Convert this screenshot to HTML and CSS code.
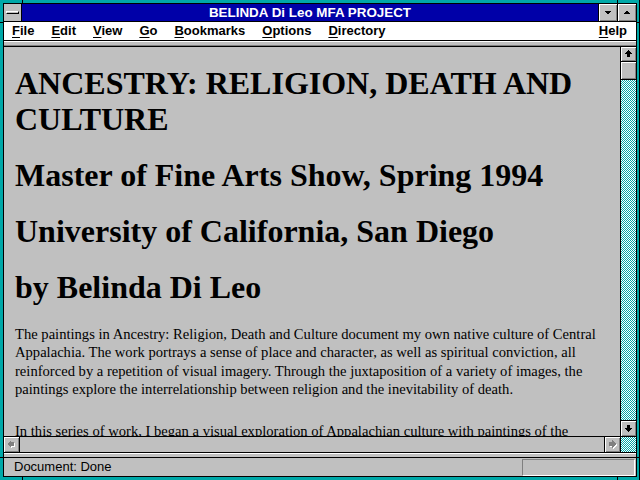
FILE: index.html
```html
<!DOCTYPE html>
<html>
<head>
<meta charset="utf-8">
<title>BELINDA Di Leo MFA PROJECT</title>
<link rel="stylesheet" href="styles.css">
</head>
<body>
<div class="screen">
  <span class="mark mark-tl-v"></span>
  <span class="mark mark-tl-h"></span>
  <span class="mark mark-tr-v"></span>
  <span class="mark mark-tr-h"></span>
  <span class="mark mark-bl-v"></span>
  <span class="mark mark-bl-h"></span>
  <span class="mark mark-br-v"></span>
  <span class="mark mark-br-h"></span>
  <div class="win">
    <div class="titlebar">
      <div class="sysbox"><span class="sysbar"></span></div>
      <div class="title">BELINDA Di Leo MFA PROJECT</div>
      <div class="tbtn">
        <svg width="18" height="17" viewBox="0 0 18 17" shape-rendering="crispEdges"><polygon points="5,7 12,7 8.5,10.5" fill="#000"/></svg>
      </div>
      <div class="tbtn">
        <svg width="18" height="17" viewBox="0 0 18 17" shape-rendering="crispEdges"><polygon points="5,10 12,10 8.5,6.5" fill="#000"/></svg>
      </div>
    </div>
    <div class="menubar">
      <span class="mi"><u>F</u>ile</span>
      <span class="mi"><u>E</u>dit</span>
      <span class="mi"><u>V</u>iew</span>
      <span class="mi"><u>G</u>o</span>
      <span class="mi"><u>B</u>ookmarks</span>
      <span class="mi"><u>O</u>ptions</span>
      <span class="mi"><u>D</u>irectory</span>
      <span class="mi mi-help"><u>H</u>elp</span>
    </div>
    <div class="band"></div>
    <div class="docrow">
      <div class="doc">
        <h1>ANCESTRY: RELIGION, DEATH AND CULTURE</h1>
        <h1>Master of Fine Arts Show, Spring 1994</h1>
        <h1>University of California, San Diego</h1>
        <h1>by Belinda Di Leo</h1>
        <p>The paintings in Ancestry: Religion, Death and Culture document my own native culture of Central Appalachia. The work portrays a sense of place and character, as well as spiritual conviction, all reinforced by a repetition of visual imagery. Through the juxtaposition of a variety of images, the paintings explore the interrelationship between religion and the inevitability of death.</p>
        <p>In this series of work, I began a visual exploration of Appalachian culture with paintings of the people, places and objects that shape the identity of the region.</p>
      </div>
      <div class="vscroll">
        <div class="sbtn">
          <svg width="15" height="14" viewBox="0 0 15 14" shape-rendering="crispEdges"><polygon points="7.5,3 11,7 9,7 9,10 6,10 6,7 4,7" fill="#000"/></svg>
        </div>
        <div class="thumb"></div>
        <div class="track"></div>
        <div class="sbtn sbtn-down">
          <svg width="15" height="15" viewBox="0 0 15 15" shape-rendering="crispEdges"><polygon points="7.5,11 11,7 9,7 9,4 6,4 6,7 4,7" fill="#000"/></svg>
        </div>
      </div>
    </div>
    <div class="hscroll">
      <div class="hbtn hbtn-left">
        <svg width="15" height="15" viewBox="0 0 15 15" shape-rendering="crispEdges"><polygon points="4,8 8,4 8,6 11,6 11,10 8,10 8,12" fill="#fff"/><polygon points="3,7 7,3 7,5 10,5 10,9 7,9 7,11" fill="#808080"/></svg>
      </div>
      <div class="htrack"></div>
      <div class="hbtn hbtn-right">
        <svg width="15" height="15" viewBox="0 0 15 15" shape-rendering="crispEdges"><polygon points="12,8 8,4 8,6 5,6 5,10 8,10 8,12" fill="#fff"/><polygon points="11,7 7,3 7,5 4,5 4,9 7,9 7,11" fill="#808080"/></svg>
      </div>
      <div class="hcorner"></div>
    </div>
    <div class="band2"></div>
    <div class="status">
      <span class="status-text">Document: Done</span>
      <div class="sunk"></div>
    </div>
  </div>
</div>
</body>
</html>
```
FILE: styles.css
```css
* { box-sizing: border-box; margin: 0; padding: 0; }
body { margin: 0; width: 640px; height: 480px; overflow: hidden; background: #00a8a8; }

.screen {
  position: relative;
  width: 640px;
  height: 480px;
  background: #00a8a8;
  padding: 3px 2px 3px 3px;
  border-right: 1px solid #000;
}

.mark { position: absolute; background: #000; }
.mark-tl-v { left: 22px; top: 0; width: 1px; height: 3px; }
.mark-tl-h { left: 0; top: 22px; width: 3px; height: 1px; }
.mark-tr-v { left: 617px; top: 0; width: 1px; height: 3px; }
.mark-tr-h { left: 636px; top: 22px; width: 3px; height: 1px; }
.mark-bl-v { left: 22px; top: 477px; width: 1px; height: 3px; }
.mark-bl-h { left: 0; top: 457px; width: 3px; height: 1px; }
.mark-br-v { left: 617px; top: 477px; width: 1px; height: 3px; }
.mark-br-h { left: 636px; top: 457px; width: 3px; height: 1px; }

.win {
  height: 474px;
  border: 1px solid #000;
  display: flex;
  flex-direction: column;
  background: #c0c0c0;
  overflow: hidden;
}

/* title bar */
.titlebar {
  flex: none;
  height: 18px;
  display: flex;
  background: #0000a8;
  border-bottom: 1px solid #000;
}
.sysbox {
  width: 18px;
  border-right: 1px solid #000;
  background: #c0c0c0;
  display: flex;
  align-items: center;
  justify-content: center;
}
.sysbar {
  display: block;
  width: 13px;
  height: 3px;
  background: #c0c0c0;
  border-top: 1px solid #fff;
  border-left: 1px solid #fff;
  border-bottom: 1px solid #000;
  border-right: 1px solid #000;
}
.title {
  flex: 1;
  color: #fff;
  font: bold 13.4px/17px "Liberation Sans", Arial, sans-serif;
  text-align: center;
}
.tbtn {
  width: 19px;
  border-left: 1px solid #000;
  background: #c0c0c0;
  box-shadow: inset 1px 1px #fff, inset -1px -1px #808080;
  display: flex;
  align-items: center;
  justify-content: center;
}
.tbtn svg { display: block; }

/* menu */
.menubar {
  flex: none;
  height: 19px;
  background: #fff;
  border-bottom: 1px solid #000;
  display: flex;
  padding-left: 8px;
  font: bold 13px/18px "Liberation Sans", Arial, sans-serif;
  color: #000;
}
.mi { margin-right: 17px; white-space: nowrap; }
.mi u { text-decoration-thickness: 1px; text-underline-offset: 2px; }
.mi-help { margin-left: auto; margin-right: 9px; }

.band {
  flex: none;
  height: 6px;
  background: #c0c0c0;
  border-top: 1px solid #fff;
  border-bottom: 1px solid #000;
  box-shadow: inset 0 -1px #808080;
}

/* document */
.docrow {
  flex: 1;
  display: flex;
  min-height: 0;
}
.doc {
  flex: 1;
  overflow: hidden;
  padding: 18px 6px 0 11px;
  color: #000;
  font-family: "Liberation Serif", "Times New Roman", serif;
}
.doc h1 {
  font-size: 32px;
  line-height: 36px;
  font-weight: bold;
  margin-bottom: 20px;
}
.doc p {
  font-size: 14.6px;
  line-height: 18.4px;
  margin-bottom: 23px;
}

.vscroll {
  width: 16px;
  flex: none;
  border-left: 1px solid #000;
  display: flex;
  flex-direction: column;
}
.sbtn {
  height: 15px;
  flex: none;
  background: #c0c0c0;
  border-bottom: 1px solid #000;
  box-shadow: inset 1px 1px #fff, inset -1px -1px #808080;
  display: flex;
  align-items: center;
  justify-content: center;
}
.sbtn svg { display: block; }
.sbtn-down { border-bottom: none; border-top: 1px solid #000; height: 16px; }
.thumb {
  height: 18px;
  flex: none;
  background: #c0c0c0;
  border-bottom: 1px solid #000;
  box-shadow: inset 1px 1px #fff, inset -1px -1px #808080;
}
.track, .hcorner {
  background: repeating-conic-gradient(#00a8a8 0 25%, #ffffff 0 50%) 0 0 / 2px 2px;
}
.track { flex: 1; }

.hscroll {
  flex: none;
  height: 17px;
  display: flex;
  border-top: 1px solid #000;
  border-bottom: 1px solid #000;
}
.hbtn {
  width: 16px;
  flex: none;
  background: #c0c0c0;
  box-shadow: inset 1px 1px #fff, inset -1px -1px #808080;
  display: flex;
  align-items: center;
  justify-content: center;
}
.hbtn svg { display: block; }
.hbtn-left { border-right: 1px solid #000; }
.hbtn-right { border-left: 1px solid #000; }
.htrack { flex: 1; background: #c0c0c0; }
.hcorner { width: 16px; flex: none; border-left: 1px solid #000; }

.band2 {
  flex: none;
  height: 5px;
  background: #c0c0c0;
  border-top: 1px solid #fff;
  border-bottom: 1px solid #000;
}

.status {
  flex: none;
  height: 18px;
  display: flex;
  align-items: center;
  padding-left: 10px;
  font: 13px/16px "Liberation Sans", Arial, sans-serif;
  color: #000;
}
.status-text { flex: 1; }
.sunk {
  width: 113px;
  height: 17px;
  margin-right: 1px;
  margin-top: 1px;
  border-top: 1px solid #808080;
  border-left: 1px solid #808080;
  border-bottom: 1px solid #fff;
  border-right: 1px solid #fff;
}
```
